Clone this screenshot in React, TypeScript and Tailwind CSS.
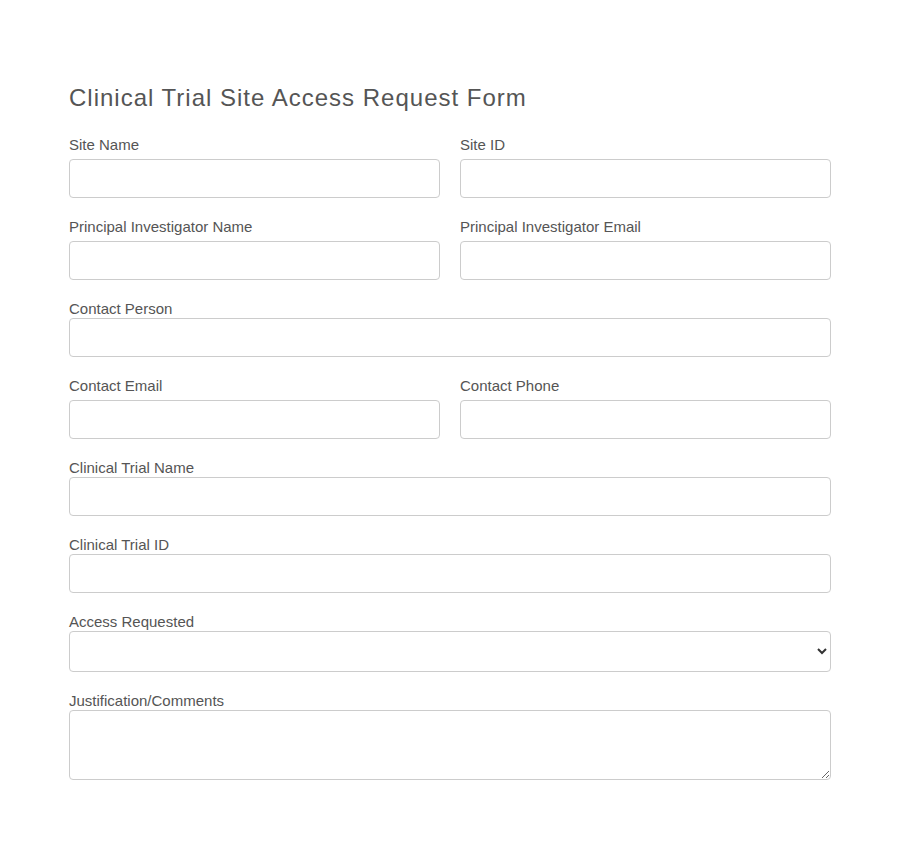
import React from 'react';

const font = { fontFamily: '"Liberation Sans", Arial, sans-serif' };

const inputCls =
  'block w-full h-[39px] px-3 border border-[#cccccc] rounded-[4px] bg-white text-[15px] text-[#333] outline-none';

// Half-width field used in the two-column rows
const HalfField = ({ label, type = 'text' }: { label: string; type?: string }) => (
  <div className="flex-1 min-w-0">
    <label className="block mb-[6px] text-[15px] leading-[17px] text-[#555]">{label}</label>
    <input type={type} className={inputCls} />
  </div>
);

// Full-width field, label sits right on top of the input
const FullField = ({ label, children }: { label: string; children?: React.ReactNode }) => (
  <div className="mb-[20px]">
    <label className="block mb-px text-[15px] leading-[17px] text-[#555]">{label}</label>
    {children ?? <input type="text" className={inputCls} />}
  </div>
);

export default function App() {
  return (
    <div className="min-h-screen bg-white" style={font}>
      <form className="w-[762px] mx-auto pt-[84px] pb-10">
        <h1 className="text-[24px] leading-[27px] tracking-[1px] text-[#555] mb-[25px] font-normal">
          Clinical Trial Site Access Request Form
        </h1>

        <div className="flex gap-[20px] mb-[20px]">
          <HalfField label="Site Name" />
          <HalfField label="Site ID" />
        </div>

        <div className="flex gap-[20px] mb-[20px]">
          <HalfField label="Principal Investigator Name" />
          <HalfField label="Principal Investigator Email" type="email" />
        </div>

        <FullField label="Contact Person" />

        <div className="flex gap-[20px] mb-[20px]">
          <HalfField label="Contact Email" type="email" />
          <HalfField label="Contact Phone" type="tel" />
        </div>

        <FullField label="Clinical Trial Name" />
        <FullField label="Clinical Trial ID" />

        <FullField label="Access Requested">
          <select className="block w-full h-[41px] px-2 border border-[#cccccc] rounded-[4px] bg-white text-[15px] text-[#333] outline-none">
            <option value=""></option>
            <option>Read Only</option>
            <option>Data Entry</option>
            <option>Administrator</option>
          </select>
        </FullField>

        <FullField label="Justification/Comments">
          <textarea className="block w-full h-[70px] px-3 py-2 border border-[#cccccc] rounded-[4px] bg-white text-[15px] text-[#333] outline-none" />
        </FullField>
      </form>
    </div>
  );
}
